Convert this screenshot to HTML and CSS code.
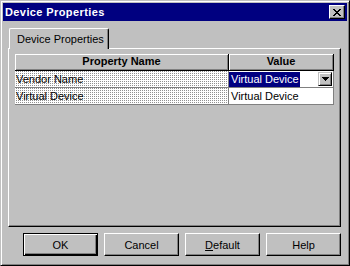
FILE: index.html
```html
<!DOCTYPE html>
<html lang="en">
<head>
  <meta charset="UTF-8" />
  <title>Device Properties</title>
  <link rel="stylesheet" href="styles.css">
</head>
<body>

  <div class="window">
    <!-- Title bar -->
    <div class="titlebar">
      <span class="title">Device Properties</span>
      <span class="close-btn">
        <svg width="8" height="7" viewBox="0 0 8 7"><path d="M0 0h2v1h-2z M6 0h2v1h-2z M1 1h2v1h-2z M5 1h2v1h-2z M2 2h4v1h-4z M3 3h2v1h-2z M2 4h4v1h-4z M1 5h2v1h-2z M5 5h2v1h-2z M0 6h2v1h-2z M6 6h2v1h-2z" fill="#000"/></svg>
      </span>
    </div>

    <div class="content">
      <!-- Tabs -->
      <div class="tabs">
        <div class="tab">Device Properties</div>
      </div>

      <div class="panel">
        <div class="grid">
          <div class="grid-row head">
            <div class="cell name">Property Name</div>
            <div class="cell value">Value</div>
          </div>
          <div class="grid-row first">
            <div class="cell name dotted">Vendor Name</div>
            <div class="cell value editing">
              <span class="selected">Virtual Device</span>
              <span class="combo-btn">
                <svg width="7" height="4" viewBox="0 0 7 4"><path d="M0 0h7v1h-7z M1 1h5v1h-5z M2 2h3v1h-3z M3 3h1v1h-1z" fill="#000"/></svg>
              </span>
            </div>
          </div>
          <div class="grid-row">
            <div class="cell name dotted">Virtual Device</div>
            <div class="cell value">Virtual Device</div>
          </div>
        </div>
      </div>

      <!-- Botones -->
      <div class="buttons">
        <button class="btn default-btn">OK</button>
        <button class="btn">Cancel</button>
        <button class="btn"><u>D</u>efault</button>
        <button class="btn">Help</button>
      </div>
    </div>
  </div>

</body>
</html>
```

FILE: styles.css
```css
body {
  margin: 0;
  font-family: "Liberation Sans", Arial, sans-serif;
  font-size: 11px;
  background: #c0c0c0;
}

.window {
  width: 350px;
  height: 266px;
  box-sizing: border-box;
  border: 1px solid;
  border-color: #c0c0c0 #000 #000 #c0c0c0;
  box-shadow: inset 1px 1px #fff, inset -1px -1px #808080;
  padding: 2px;
  background: #c0c0c0;
  display: flex;
  flex-direction: column;
}

.titlebar {
  height: 18px;
  background: #000080;
  color: #fff;
  display: flex;
  align-items: center;
  justify-content: space-between;
  padding: 0 2px;
}

.title {
  font-weight: bold;
  letter-spacing: 0.4px;
}

.close-btn {
  width: 16px;
  height: 14px;
  box-sizing: border-box;
  border: 1px solid;
  border-color: #fff #000 #000 #fff;
  box-shadow: inset -1px -1px #808080;
  background: #c0c0c0;
  display: flex;
  align-items: center;
  justify-content: center;
}

.content {
  padding: 7px 6px 0 5px;
  display: flex;
  flex-direction: column;
}

.tabs {
  display: flex;
}

.tab {
  position: relative;
  z-index: 1;
  width: 100px;
  height: 21px;
  margin: 0 0 -1px 1px;
  box-sizing: border-box;
  padding: 3px 0 0 7px;
  border: 1px solid;
  border-color: #fff #000 transparent #fff;
  border-bottom: none;
  border-radius: 2px 2px 0 0;
  box-shadow: inset -1px 0 #808080;
  background: #c0c0c0;
  line-height: 14px;
}

.panel {
  height: 179px;
  box-sizing: border-box;
  border: 1px solid;
  border-color: #fff #000 #000 #fff;
  box-shadow: inset -1px -1px #808080;
  padding: 5px 0 0 6px;
}

.grid {
  width: 319px;
}

.grid-row {
  display: flex;
  height: 16px;
  border-bottom: 1px solid #808080;
}

.grid-row.first {
  height: 16px;
}

.grid-row.head {
  height: 17px;
  border-bottom: none;
  font-weight: bold;
}

.cell {
  box-sizing: border-box;
  border-right: 1px solid #808080;
  line-height: 16px;
  white-space: nowrap;
}

.cell.name {
  width: 214px;
  padding-left: 1px;
}

.cell.value {
  width: 105px;
  padding-left: 2px;
  background: #fff;
}

.head .cell {
  background: #c0c0c0;
  text-align: center;
  border-right: 1px solid #000;
  border-bottom: 1px solid #000;
  box-shadow: inset 1px 1px #fff, inset -1px -1px #808080;
  line-height: 15px;
  padding: 0;
}

.dotted {
  background-color: #fff;
  background-image: conic-gradient(#909090 25%, transparent 0);
  background-size: 2px 2px;
}

.cell.editing {
  padding: 1px 1px 0 0;
  display: flex;
  justify-content: space-between;
  align-items: flex-start;
}

.selected {
  background: #000080;
  color: #fff;
  padding: 0 1px 0 2px;
  line-height: 15px;
}

.combo-btn {
  width: 14px;
  height: 14px;
  box-sizing: border-box;
  border: 1px solid;
  border-color: #c0c0c0 #000 #000 #c0c0c0;
  box-shadow: inset 1px 1px #fff, inset -1px -1px #808080;
  background: #c0c0c0;
  display: flex;
  align-items: center;
  justify-content: center;
}

.buttons {
  display: flex;
  justify-content: flex-end;
  gap: 6px;
  margin-top: 6px;
  padding-right: 0;
}

.btn {
  width: 75px;
  height: 23px;
  box-sizing: border-box;
  padding: 0;
  margin: 0;
  font-family: inherit;
  font-size: 11px;
  color: #000;
  background: #c0c0c0;
  border: 1px solid;
  border-color: #fff #000 #000 #fff;
  box-shadow: inset -1px -1px #808080;
  border-radius: 0;
}

.default-btn {
  border-color: #000;
  box-shadow: inset 1px 1px #fff, inset -1px -1px #000, inset -2px -2px #808080;
}
```
